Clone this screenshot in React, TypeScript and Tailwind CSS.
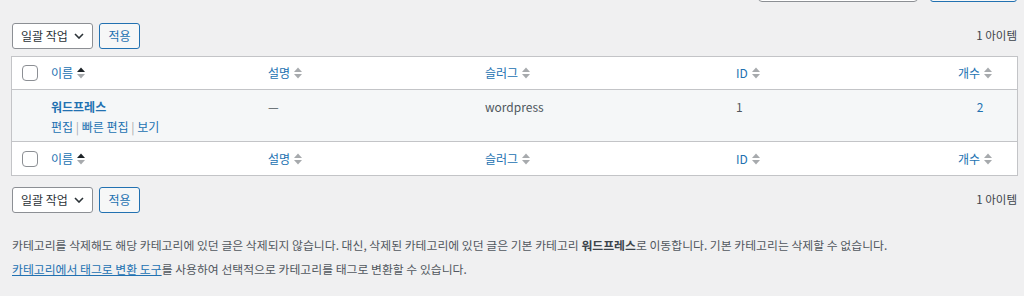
function SortIcon({ up = false }: { up?: boolean }) {
    return (
        <svg width="8" height="12" viewBox="0 0 8 12" className="shrink-0">
            <polygon points="0,5 4,0.5 8,5" fill={up ? '#1d2327' : '#a7aaad'} />
            <polygon points="0,7 4,11.5 8,7" fill="#a7aaad" />
        </svg>
    );
}

function Checkbox() {
    return <div className="w-[16px] h-[16px] rounded-[4px] border border-[#8c8f94] bg-white" />;
}

function BulkActions() {
    return (
        <div className="flex items-center h-[26px] justify-between">
            <div className="flex items-center gap-[6px] pl-[1px]">
                <div className="w-[81px] h-[26px] rounded-[3px] border border-[#8c8f94] bg-white flex items-center justify-between pl-[8px] pr-[8px] text-[12px] text-[#2c3338]">
                    <span>일괄 작업</span>
                    <svg width="10" height="6" viewBox="0 0 10 6">
                        <polyline points="1,1 5,5 9,1" fill="none" stroke="#2c3338" strokeWidth="1.6" />
                    </svg>
                </div>
                <div className="w-[41px] h-[26px] rounded-[3px] border border-[#2271b1] bg-[#f6f7f7] flex items-center justify-center text-[12px] text-[#2271b1]">
                    적용
                </div>
            </div>
            <span className="text-[11.5px] text-[#3c434a] pr-[1px]">1 아이템</span>
        </div>
    );
}

function HeaderRow({ bottom }: { bottom?: boolean }) {
    const cell = 'flex items-center gap-[4px] pl-[10px] text-[#2271b1]';
    return (
        <div
            className={
                'grid grid-cols-[29px_1fr_1fr_251px_1fr_74px] h-[33px] text-[12px] ' +
                (bottom ? '' : 'border-b border-[#c3c4c7]')
            }
        >
            <div className="flex items-center pl-[10px]">
                <Checkbox />
            </div>
            <div className={cell}>
                <span>이름</span>
                <SortIcon up />
            </div>
            <div className={cell}>
                <span>설명</span>
                <SortIcon />
            </div>
            <div className={cell}>
                <span>슬러그</span>
                <SortIcon />
            </div>
            <div className={cell}>
                <span>ID</span>
                <SortIcon />
            </div>
            <div className="flex items-center justify-end gap-[4px] pr-[25px] text-[#2271b1]">
                <span>개수</span>
                <SortIcon />
            </div>
        </div>
    );
}

export default function App() {
    return (
        <div className="w-[1024px] h-[296px] overflow-hidden bg-[#f0f0f1] pl-[11px] pr-[6px] font-['Noto_Sans_CJK_KR','Noto_Sans',sans-serif]">
            {/* search box sits mostly above the fold */}
            <div className="flex justify-end gap-[12px] -mt-[28px] h-[30px] pr-[1px]">
                <div className="w-[160px] h-[30px] rounded-[4px] border border-[#8c8f94] bg-white" />
                <div className="w-[87px] h-[30px] rounded-[3px] border border-[#2271b1] bg-[#f6f7f7]" />
            </div>

            <div className="mt-[21px]">
                <BulkActions />
            </div>

            <div className="mt-[7px] border border-[#c3c4c7] bg-white">
                <HeaderRow />
                <div className="grid grid-cols-[29px_1fr_1fr_251px_1fr_74px] h-[52px] bg-[#f5f7f8] border-b border-[#c3c4c7] text-[12px] text-[#50575e]">
                    <div />
                    <div className="pl-[10px] pt-[7px]">
                        <div className="font-bold text-[#2271b1] leading-[19px]">워드프레스</div>
                        <div className="text-[12px] text-[#2271b1] leading-[19px] mt-[1px]">
                            편집 <span className="text-[#a7aaad]">|</span> 빠른 편집{' '}
                            <span className="text-[#a7aaad]">|</span> 보기
                        </div>
                    </div>
                    <div className="pl-[10px] pt-[7px] leading-[19px]">—</div>
                    <div className="pl-[10px] pt-[7px] leading-[19px]">wordpress</div>
                    <div className="pl-[10px] pt-[7px] leading-[19px]">1</div>
                    <div className="pt-[7px] leading-[19px] text-center text-[#2271b1]">2</div>
                </div>
                <HeaderRow bottom />
            </div>

            <div className="mt-[11px]">
                <BulkActions />
            </div>

            <div className="mt-[22px] text-[11.85px] leading-[20px] text-[#50575e] pl-[1px]">
                <p>
                    카테고리를 삭제해도 해당 카테고리에 있던 글은 삭제되지 않습니다. 대신, 삭제된 카테고리에 있던 글은 기본
                    카테고리 <strong className="text-[#3c434a]">워드프레스</strong>로 이동합니다. 기본 카테고리는 삭제할 수
                    없습니다.
                </p>
                <p className="mt-[4px]">
                    <span className="text-[#2271b1] underline">카테고리에서 태그로 변환 도구</span>를 사용하여 선택적으로
                    카테고리를 태그로 변환할 수 있습니다.
                </p>
            </div>
        </div>
    );
}
